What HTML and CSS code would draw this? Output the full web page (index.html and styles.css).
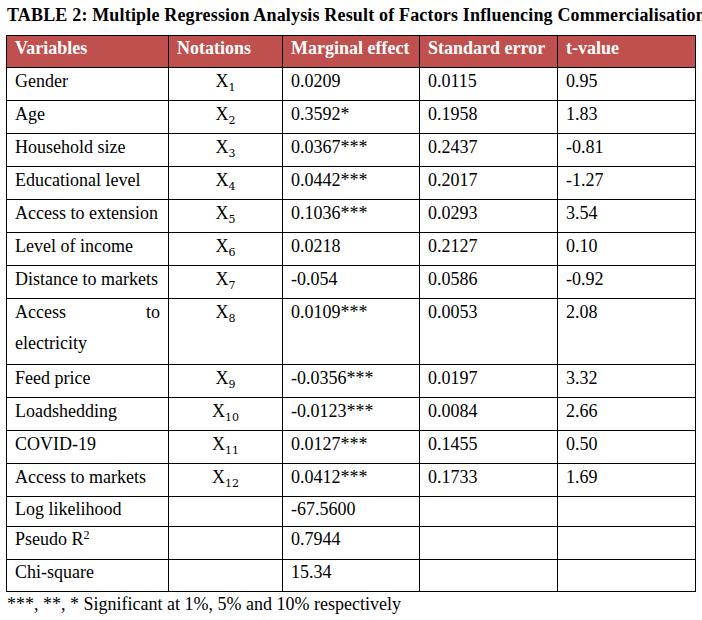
FILE: index.html
```html
<!DOCTYPE html>
<html lang="en">
<head>
<meta charset="utf-8">
<title>Table 2</title>
<link rel="stylesheet" href="styles.css">
</head>
<body>
<div class="page">
  <p class="title">TABLE 2: Multiple Regression Analysis Result of Factors Influencing Commercialisation</p>
  <table class="results">
    <colgroup>
      <col class="c-var"><col class="c-not"><col class="c-me"><col class="c-se"><col class="c-t">
    </colgroup>
    <thead>
      <tr class="r-head"><th>Variables</th><th>Notations</th><th>Marginal effect</th><th>Standard error</th><th>t-value</th></tr>
    </thead>
    <tbody>
      <tr><td>Gender</td><td class="nota">X<sub>1</sub></td><td>0.0209</td><td>0.0115</td><td>0.95</td></tr>
      <tr><td>Age</td><td class="nota">X<sub>2</sub></td><td>0.3592*</td><td>0.1958</td><td>1.83</td></tr>
      <tr><td>Household size</td><td class="nota">X<sub>3</sub></td><td>0.0367***</td><td>0.2437</td><td>-0.81</td></tr>
      <tr><td>Educational level</td><td class="nota">X<sub>4</sub></td><td>0.0442***</td><td>0.2017</td><td>-1.27</td></tr>
      <tr><td>Access to extension</td><td class="nota">X<sub>5</sub></td><td>0.1036***</td><td>0.0293</td><td>3.54</td></tr>
      <tr><td>Level of income</td><td class="nota">X<sub>6</sub></td><td>0.0218</td><td>0.2127</td><td>0.10</td></tr>
      <tr><td>Distance to markets</td><td class="nota">X<sub>7</sub></td><td>-0.054</td><td>0.0586</td><td>-0.92</td></tr>
      <tr class="r-double"><td><div class="wrap">Access to<br>electricity</div></td><td class="nota">X<sub>8</sub></td><td>0.0109***</td><td>0.0053</td><td>2.08</td></tr>
      <tr><td>Feed price</td><td class="nota">X<sub>9</sub></td><td>-0.0356***</td><td>0.0197</td><td>3.32</td></tr>
      <tr><td>Loadshedding</td><td class="nota">X<sub>10</sub></td><td>-0.0123***</td><td>0.0084</td><td>2.66</td></tr>
      <tr><td>COVID-19</td><td class="nota">X<sub>11</sub></td><td>0.0127***</td><td>0.1455</td><td>0.50</td></tr>
      <tr><td>Access to markets</td><td class="nota">X<sub>12</sub></td><td>0.0412***</td><td>0.1733</td><td>1.69</td></tr>
      <tr class="r-log"><td>Log likelihood</td><td></td><td>-67.5600</td><td></td><td></td></tr>
      <tr class="r-pseudo"><td>Pseudo R<sup>2</sup></td><td></td><td>0.7944</td><td></td><td></td></tr>
      <tr class="r-chi"><td>Chi-square</td><td></td><td>15.34</td><td></td><td></td></tr>
    </tbody>
  </table>
  <p class="note">***, **, * Significant at 1%, 5% and 10% respectively</p>
</div>
</body>
</html>
```
FILE: styles.css
```css
html, body {
  margin: 0;
  padding: 0;
  background: #ffffff;
}

body {
  width: 702px;
  height: 620px;
  overflow: hidden;
  font-family: "Liberation Serif", "Times New Roman", serif;
  font-size: 18px;
  color: #000000;
}

.page {
  padding: 3px 0 0 6px;
}

.title {
  margin: 0 0 8px;
  padding-left: 1px;
  font-weight: bold;
  line-height: 24px;
  letter-spacing: 0.17px;
  white-space: nowrap;
}

.results {
  border-collapse: collapse;
  table-layout: fixed;
  width: 689px;
}

.c-var { width: 162px; }
.c-not { width: 114px; }
.c-me  { width: 137px; }
.c-se  { width: 138px; }
.c-t   { width: 138px; }

.results th,
.results td {
  border: 1px solid #000000;
  padding: 0 8px;
  text-align: left;
  vertical-align: top;
  line-height: 24px;
}

.results th {
  background: #c0504d;
  color: #ffffff;
  font-weight: bold;
}

.r-head { height: 32px; }
.results tbody tr { height: 33px; }
.results tbody tr.r-double { height: 66px; }
.results tbody tr.r-log { height: 30px; }
.results tbody tr.r-pseudo { height: 33px; }
.results tbody tr.r-chi { height: 32px; }

.results td.nota {
  text-align: center;
}

.results tbody tr td {
  padding-top: 1px;
}

.results tbody tr.r-log td,
.results tbody tr.r-pseudo td,
.results tbody tr.r-chi td {
  padding-top: 0;
}

sub {
  font-family: "DejaVu Serif", serif;
  font-size: 11px;
  line-height: 0;
  vertical-align: -4px;
}

sup {
  font-size: 12px;
  line-height: 0;
  vertical-align: 6px;
}

.wrap {
  line-height: 31px;
  margin-top: -3px;
  text-align: justify;
  text-align-last: justify;
}

.note {
  margin: 0;
  line-height: 24px;
  padding-left: 1px;
}
```
